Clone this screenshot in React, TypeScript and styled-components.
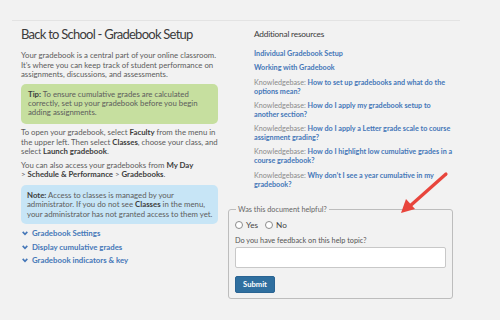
import React from "react";
import styled, { createGlobalStyle } from "styled-components";

const GlobalStyle = createGlobalStyle`
  html, body {
    margin: 0;
    padding: 0;
    background: #f2f2f2;
  }
  body {
    font-family: Lato, "Liberation Sans", sans-serif;
    color: #5a5a5a;
  }
`;

const Page = styled.div`
  position: relative;
  width: 500px;
  height: 320px;
  overflow: hidden;
  background: #f2f2f2;
  padding-top: 20px;
  box-sizing: border-box;
`;

const TopRule = styled.div`
  margin-left: 12px;
  width: 448px;
  border-top: 1px solid #e3e3e3;
`;

const Columns = styled.div`
  display: grid;
  grid-template-columns: 197px 200px;
  column-gap: 36px;
  padding-left: 21px;
`;

const LeftCol = styled.div`
  display: flex;
  flex-direction: column;
`;

const Title = styled.h1`
  margin: 4px 0 0;
  font-family: Lato, "Liberation Sans", sans-serif;
  font-weight: 400;
  font-size: 13px;
  letter-spacing: -0.75px;
  color: #3b3b3b;
  line-height: 18px;
  white-space: nowrap;
`;

const Para = styled.p<{ $top: number }>`
  margin: ${(p) => p.$top}px 0 0;
  font-size: 7.8px;
  line-height: 9.5px;
  color: #5c5c5c;

  b {
    color: #3d3d3d;
    font-weight: 700;
  }
`;

const Callout = styled.div<{ $tone: "tip" | "note"; $top: number }>`
  margin-top: ${(p) => p.$top}px;
  padding: ${(p) => (p.$tone === "tip" ? "6px 8px 6px 7px" : "6px 2px 5px 6px")};
  border-radius: 5px;
  background: ${(p) => (p.$tone === "tip" ? "#c6df9f" : "#c7e5f6")};
  font-size: 7.8px;
  line-height: 9.4px;
  color: #5c5c5c;

  b {
    color: #3d3d3d;
    font-weight: 700;
  }
`;

const Toggles = styled.div`
  margin-top: 4px;
  display: flex;
  flex-direction: column;
  gap: 2.7px;
`;

const Toggle = styled.a`
  display: flex;
  align-items: center;
  gap: 4px;
  padding-left: 1px;
  font-size: 7.8px;
  line-height: 11px;
  font-weight: 700;
  color: #4577b8;
  text-decoration: none;
`;

const RightCol = styled.div`
  display: flex;
  flex-direction: column;
`;

const SideHeading = styled.h2`
  margin: 8px 0 0;
  font-family: Lato, "Liberation Sans", sans-serif;
  font-weight: 400;
  font-size: 8.3px;
  line-height: 10px;
  letter-spacing: -0.2px;
  color: #3b3b3b;
`;

const ResourceList = styled.div`
  margin-top: 10px;
  display: flex;
  flex-direction: column;
  gap: 5.3px;
`;

const Resource = styled.div`
  font-size: 7.2px;
  line-height: 9px;
  color: #8a8a8a;

  a {
    color: #4577b8;
    font-weight: 700;
    text-decoration: none;
  }
`;

const Feedback = styled.fieldset`
  margin: 16px 0 0 -26px;
  width: 225px;
  box-sizing: border-box;
  padding: 2px 6px 5px 6px;
  border: 1px solid #bdbdbd;
  border-radius: 3px;
  font-size: 7.3px;
  color: #555;
`;

const Legend = styled.legend`
  padding: 0 2px;
  margin-left: 1px;
  font-size: 7.3px;
  color: #666;
`;

const RadioRow = styled.div`
  display: flex;
  align-items: center;
  gap: 3px;
  margin-top: 4px;
  font-size: 8.2px;
  color: #444;
`;

const Radio = styled.span`
  width: 6px;
  height: 6px;
  border: 1px solid #8c8c8c;
  border-radius: 50%;
  background: #fff;
`;

const RadioLabel = styled.span`
  margin-right: 4px;
`;

const FieldLabel = styled.div`
  margin-top: 6px;
  font-size: 7.3px;
  color: #555;
`;

const TextBox = styled.div`
  margin-top: 2px;
  height: 19px;
  background: #fff;
  border: 1px solid #c8c8c8;
  border-radius: 2px;
`;

const SubmitButton = styled.button`
  margin-top: 8px;
  width: 40px;
  height: 17px;
  padding: 0;
  border: 1px solid #2a6493;
  border-radius: 2px;
  background: #2f6f9f;
  color: #fff;
  font-family: Lato, "Liberation Sans", sans-serif;
  font-size: 7.6px;
  font-weight: 700;
`;

const Arrow = styled.svg`
  position: absolute;
  left: 396px;
  top: 168px;
`;

function Chevron() {
  return (
    <svg width="6" height="5" viewBox="0 0 6 5">
      <path d="M0.7 0.9 L3 3.4 L5.3 0.9" fill="none" stroke="#4577b8" strokeWidth="1.6" />
    </svg>
  );
}

const resources = [
  { kb: false, text: "Individual Gradebook Setup" },
  { kb: false, text: "Working with Gradebook" },
  { kb: true, text: "How to set up gradebooks and what do the options mean?" },
  { kb: true, text: "How do I apply my gradebook setup to another section?" },
  { kb: true, text: "How do I apply a Letter grade scale to course assignment grading?" },
  { kb: true, text: "How do I highlight low cumulative grades in a course gradebook?" },
  { kb: true, text: "Why don’t I see a year cumulative in my gradebook?" },
];

export default function App() {
  return (
    <>
      <GlobalStyle />
      <Page>
        <TopRule />
        <Columns>
          <LeftCol>
            <Title>Back to School - Gradebook Setup</Title>
            <Para $top={8}>
              Your gradebook is a central part of your online classroom. It’s where you can keep
              track of student performance on assignments, discussions, and assessments.
            </Para>
            <Callout $tone="tip" $top={4}>
              <b>Tip:</b> To ensure cumulative grades are calculated correctly, set up your
              gradebook before you begin adding assignments.
            </Callout>
            <Para $top={4.5}>
              To open your gradebook, select <b>Faculty</b> from the menu in the upper left. Then
              select <b>Classes</b>, choose your class, and select <b>Launch gradebook</b>.
            </Para>
            <Para $top={4}>
              You can also access your gradebooks from <b>My Day</b>
              <br />
              &gt; <b>Schedule &amp; Performance</b> &gt; <b>Gradebooks</b>.
            </Para>
            <Callout $tone="note" $top={5}>
              <b>Note:</b> Access to classes is managed by your administrator. If you do not see{" "}
              <b>Classes</b> in the menu, your administrator has not granted access to them yet.
            </Callout>
            <Toggles>
              <Toggle>
                <Chevron /> Gradebook Settings
              </Toggle>
              <Toggle>
                <Chevron /> Display cumulative grades
              </Toggle>
              <Toggle>
                <Chevron /> Gradebook indicators &amp; key
              </Toggle>
            </Toggles>
          </LeftCol>

          <RightCol>
            <SideHeading>Additional resources</SideHeading>
            <ResourceList>
              {resources.map((r) => (
                <Resource key={r.text}>
                  {r.kb && "Knowledgebase: "}
                  <a>{r.text}</a>
                </Resource>
              ))}
            </ResourceList>
            <Feedback>
              <Legend>Was this document helpful?</Legend>
              <RadioRow>
                <Radio />
                <RadioLabel>Yes</RadioLabel>
                <Radio />
                <RadioLabel>No</RadioLabel>
              </RadioRow>
              <FieldLabel>Do you have feedback on this help topic?</FieldLabel>
              <TextBox />
              <SubmitButton>Submit</SubmitButton>
            </Feedback>
          </RightCol>
        </Columns>

        <Arrow width="56" height="50" viewBox="0 0 56 50">
          <line x1="50" y1="6" x2="14" y2="38" stroke="#e8453c" strokeWidth="3.2" strokeLinecap="round" />
          <polygon points="5,45 10,31 19,41" fill="#e8453c" />
        </Arrow>
      </Page>
    </>
  );
}
